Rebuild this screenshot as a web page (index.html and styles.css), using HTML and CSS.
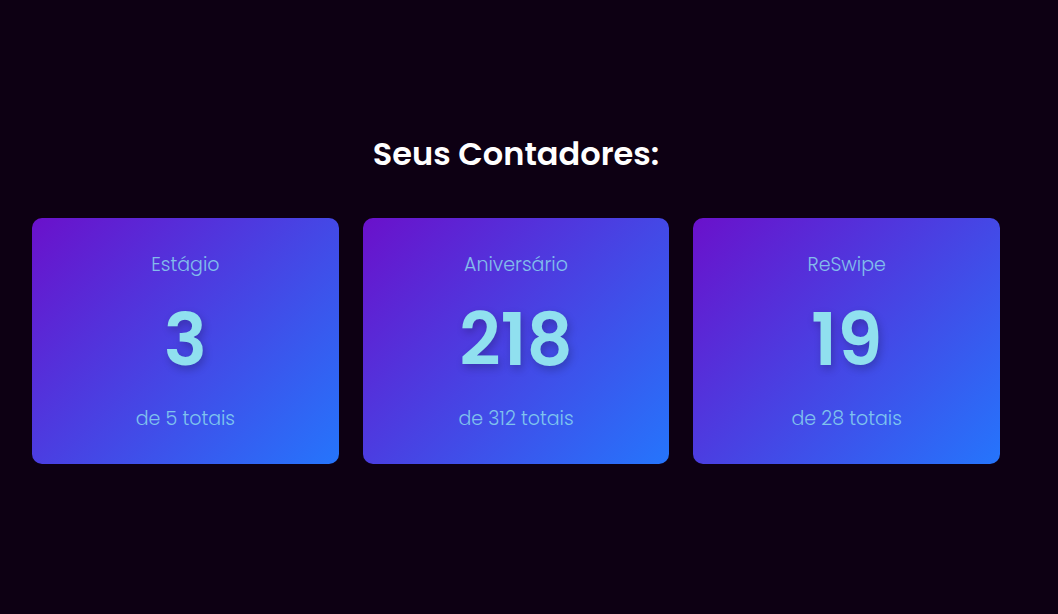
FILE: index.html
```html
<!DOCTYPE html>
<html lang="pt">
<head>
<meta charset="utf-8">
<title>Seus Contadores</title>
<link rel="stylesheet" href="styles.css">
</head>
<body>
<main class="page">
  <h2 class="title">Seus Contadores:</h2>
  <section class="cards">
    <div class="card">
      <div class="card-label">Estágio</div>
      <div class="card-number">3</div>
      <div class="card-total">de 5 totais</div>
    </div>
    <div class="card">
      <div class="card-label">Aniversário</div>
      <div class="card-number">218</div>
      <div class="card-total">de 312 totais</div>
    </div>
    <div class="card">
      <div class="card-label">ReSwipe</div>
      <div class="card-number">19</div>
      <div class="card-total">de 28 totais</div>
    </div>
  </section>
</main>
</body>
</html>
```
FILE: styles.css
```css
html, body {
  margin: 0;
  padding: 0;
  background: #0d0013;
  height: 100%;
}
body {
  font-family: "Poppins", "Inter", "Noto Sans", sans-serif;
  color: #fff;
}
.page {
  width: 968px;
  padding: 134px 0 0 32px;
}
.title {
  margin: 0 0 44px;
  font-size: 32px;
  line-height: 40px;
  font-weight: 600;
  text-align: center;
  color: #ffffff;
}
.cards {
  display: grid;
  grid-template-columns: repeat(3, 1fr);
  gap: 24px;
}
.card {
  height: 246px;
  box-sizing: border-box;
  padding: 33px 20px 0;
  border-radius: 10px;
  background: linear-gradient(135deg, #6a11cb 0%, #2575fc 100%);
  display: flex;
  flex-direction: column;
  align-items: center;
  text-align: center;
}
.card-label {
  font-size: 19px;
  line-height: 28px;
  font-weight: 300;
  color: #90e0ef;
  opacity: 0.8;
}
.card-number {
  margin-top: 23px;
  font-size: 72px;
  line-height: 76px;
  font-weight: 600;
  color: #90e0ef;
  text-shadow: 2px 4px 8px rgba(0, 0, 0, 0.22);
}
.card-total {
  margin-top: 27px;
  font-size: 19px;
  line-height: 28px;
  font-weight: 300;
  color: #90e0ef;
  opacity: 0.8;
}
```
